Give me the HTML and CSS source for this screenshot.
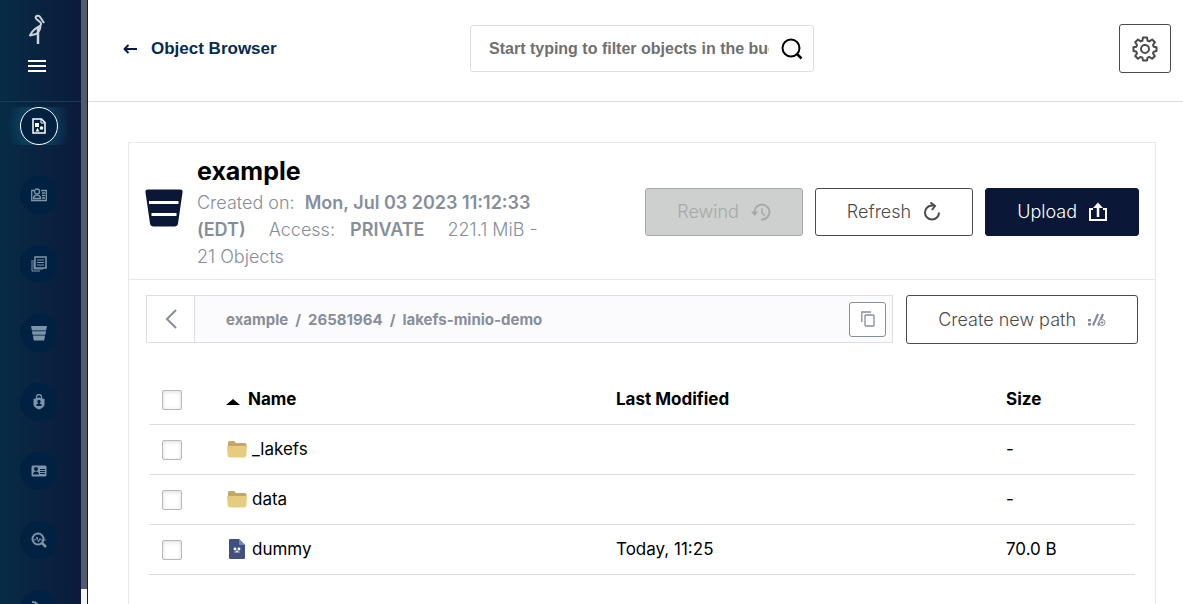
FILE: index.html
```html
<!DOCTYPE html>
<html lang="en">
<head>
    <meta charset="UTF-8">
    <meta name="viewport" content="width=device-width, initial-scale=1.0">
    <title>Object Browser</title>
    <link rel="stylesheet" href="styles.css">
</head>
<body>
    <aside class="sidebar">
        <div class="sidebar-body">
            <div class="sidebar-top">
                <svg class="logo" width="18" height="32" viewBox="0 0 18 32" fill="none" stroke="#cbd2da" stroke-width="2" stroke-linejoin="round">
                    <path d="M16 9L12.500 3.500Q11 1 8.500 2Q6.500 3.500 9 5.500L12.500 8.500Q14 11 11 12.500Q6 15 4 18L2 21.500L8 20Q12 18 12.500 12"/>
                    <path d="M10 14V30" stroke-width="2.500"/>
                </svg>
                <button class="menu-button" type="button" aria-label="Menu">
                    <svg width="18" height="12" viewBox="0 0 18 12" fill="#fff"><path d="M0 0h18v2H0zM0 5h18v2H0zM0 10h18v2H0z"/></svg>
                </button>
            </div>
            <nav class="menu">
                <a class="menu-item active" href="#" aria-label="Object Browser">
                    <span class="menu-icon">
                        <svg width="14" height="16" viewBox="0 0 14 16" fill="none" stroke="currentColor">
                            <path d="M1 1h8.500L13 4.500V15H1z" stroke-width="1.500"/>
                            <path d="M9 1v4h4"/>
                            <path d="M3 5h4v4H3zM5.500 10l2 3.500h-4z" fill="currentColor" stroke="none"/>
                            <circle cx="9.500" cy="10" r="1.800" fill="currentColor" stroke="none"/>
                        </svg>
                    </span>
                </a>
                <a class="menu-item" href="#" aria-label="Access Keys">
                    <span class="menu-icon">
                        <svg width="16" height="14" viewBox="0 0 16 14" fill="none" stroke="currentColor" stroke-width="1.300">
                            <path d="M3 2.500H.7v10h14.600v-10H10"/>
                            <circle cx="6" cy="3.500" r="2.500"/>
                            <path d="M2.500 10.500c0-4.500 7-4.500 7 0zM11 5h3M11 7.500h3M11 10h3"/>
                        </svg>
                    </span>
                </a>
                <a class="menu-item" href="#" aria-label="Documentation">
                    <span class="menu-icon">
                        <svg width="16" height="16" viewBox="0 0 16 16" fill="none" stroke="currentColor">
                            <path d="M4 1h11v11H4z" stroke-width="1.500"/>
                            <path d="M1 4v11h8M3 4v9h9M6 4h7M6 6.500h7M6 9h7"/>
                        </svg>
                    </span>
                </a>
                <a class="menu-item" href="#" aria-label="Buckets">
                    <span class="menu-icon">
                        <svg width="16" height="16" viewBox="0 0 16 16" fill="currentColor">
                            <path d="M0 1h16l-.8 4H.8zM1 6.500h14l-.6 3H1.600zM2 11h12l-.8 4.500H2.800z"/>
                            <path d="M.8 5h14.400L14 11H2z" opacity=".45"/>
                        </svg>
                    </span>
                </a>
                <a class="menu-item" href="#" aria-label="Policies">
                    <span class="menu-icon">
                        <svg width="12" height="16" viewBox="0 0 12 16" fill="none" stroke="currentColor">
                            <path d="M3.500 5V3a2.500 2.500 0 0 1 5 0v2" stroke-width="1.300"/>
                            <path d="M6 3.500L11.500 5v5c0 3-3 4.500-5.500 5.500C3.500 14.500.5 13 .5 10V5z" fill="currentColor" stroke="none"/>
                            <g class="menu-cut"><circle cx="6" cy="7.500" r="1.700"/><path d="M5 8h2v2h1.500v2h-5v-2H5z"/></g>
                        </svg>
                    </span>
                </a>
                <a class="menu-item" href="#" aria-label="Identity">
                    <span class="menu-icon">
                        <svg width="16" height="12" viewBox="0 0 16 12" fill="currentColor">
                            <rect x=".5" y=".5" width="15" height="11" rx="1.500"/>
                            <g class="menu-cut"><circle cx="5" cy="4" r="2"/><path d="M2 9.500c0-4 6-4 6 0zM9 4h5v1H9zM9 6h5v1H9zM9 8h5v1H9z"/></g>
                        </svg>
                    </span>
                </a>
                <a class="menu-item" href="#" aria-label="Monitoring">
                    <span class="menu-icon">
                        <svg width="16" height="16" viewBox="0 0 16 16" fill="none" stroke="currentColor">
                            <circle cx="7" cy="7" r="5.500" stroke-width="2"/>
                            <path d="M11 11l4 4" stroke-width="2.500"/>
                            <path d="M3 8h1.500L6 5l1.500 5L9 6.500l1 1.500h5"/>
                        </svg>
                    </span>
                </a>
                <a class="menu-item" href="#" aria-label="Notifications">
                    <span class="menu-icon">
                        <svg width="16" height="16" viewBox="0 0 16 16" fill="none" stroke="currentColor" stroke-width="2">
                            <path d="M1 1q5 0 6 4l7 8"/>
                        </svg>
                    </span>
                </a>
            </nav>
        </div>
        <div class="sidebar-track"><div class="sidebar-thumb"></div></div>
    </aside>

    <main class="content">
        <header class="page-header">
            <a class="back-link" href="#">
                <svg width="14" height="10" viewBox="0 0 14 10" fill="none" stroke="#081c42" stroke-width="2" stroke-linejoin="round"><path d="M14 5H2M5.500 1L1.500 5l4 4"/></svg>
                Object Browser
            </a>
            <div class="search">
                <input class="search-input" type="text" aria-label="Filter objects" placeholder="Start typing to filter objects in the bucket">
                <svg width="22" height="22" viewBox="0 0 22 22" fill="none" stroke="#000" stroke-width="2"><circle cx="10" cy="10" r="8.500"/><path d="M15.500 15.500L20.500 20.500" stroke-width="2.500"/></svg>
            </div>
            <button class="button settings-button" type="button" aria-label="Settings">
                <svg width="26" height="26" viewBox="0 0 26 26" fill="none" stroke="#4b4b4b" stroke-width="2" stroke-linejoin="round">
                    <path d="M11 1.500h4l.6 3.200 1.800.7 2.700-1.900 2.800 2.800L21 9l.7 1.700 2.800.6v3.800l-2.800.6L21 17.400l1.900 2.600-2.800 2.800-2.700-1.900-1.800.7L15 24.500h-4l-.6-2.900-1.800-.7-2.600 1.900L3.200 20 5 17.400l-.7-1.700-2.800-.6v-3.800l2.800-.6L5 9 3.200 6.300 6 3.500l2.600 1.900 1.800-.7z"/>
                    <circle cx="13" cy="13" r="4"/>
                </svg>
            </button>
        </header>

        <section class="panel">
            <div class="bucket-header">
                <svg class="bucket-icon" width="38" height="38" viewBox="0 0 38 38">
                    <path d="M3 .5h32q3 0 2.500 3L33 34.500q-.5 3-3.500 3h-21q-3 0-3.500-3L.5 3.500Q0 .5 3 .5z" fill="#0a1736"/>
                    <path d="M4 12h29.500v3H4zM6.500 24h25v3h-25z" fill="#fff"/>
                </svg>
                <div class="bucket-info">
                    <h1>example</h1>
                    <p>
                        <span class="info-item">Created on: <strong>Mon, Jul 03 2023 11:12:33 (EDT)</strong></span>
                        <span class="info-item">Access: <strong class="access">PRIVATE</strong></span>
                        <span>221.1 MiB - 21 Objects</span>
                    </p>
                </div>
                <div class="actions">
                    <button class="button" type="button" disabled>
                        Rewind
                        <svg width="20" height="18" viewBox="0 0 20 18" fill="none" stroke="currentColor" stroke-width="2">
                            <path d="M3.500 9.500A7.500 7.500 0 1 1 10 16.500"/>
                            <path d="M0 8.500h7.500L3.500 13z" fill="currentColor" stroke="none"/>
                            <path d="M11 5v5l3 2.500" stroke-width="1.500"/>
                        </svg>
                    </button>
                    <button class="button" type="button">
                        Refresh
                        <svg width="18" height="20" viewBox="0 0 18 20" fill="none" stroke="currentColor" stroke-width="2">
                            <path d="M16 10.500a7 7 0 1 1-7-7h2"/>
                            <path d="M7.500.5L12 4 9 8"/>
                        </svg>
                    </button>
                    <button class="button primary" type="button">
                        Upload
                        <svg width="18" height="20" viewBox="0 0 18 20" fill="none" stroke="currentColor" stroke-width="2">
                            <path d="M4 7H1v11h16V7h-3"/>
                            <path d="M9 15V4" stroke-width="2.500"/>
                            <path d="M4 6l5-5.500L14 6z" fill="currentColor" stroke="none"/>
                        </svg>
                    </button>
                </div>
            </div>

            <div class="path-row">
                <div class="breadcrumbs">
                    <button class="path-back" type="button" aria-label="Back">
                        <svg width="12" height="20" viewBox="0 0 12 20" fill="none" stroke="#868e9b" stroke-width="2"><path d="M11 1L2 10l9 9"/></svg>
                    </button>
                    <div class="path">
                        <a href="#">example</a><span>/</span><a href="#">26581964</a><span>/</span><a href="#">lakefs-minio-demo</a>
                    </div>
                    <button class="copy-button" type="button" aria-label="Copy path">
                        <svg width="14" height="16" viewBox="0 0 14 16" fill="none" stroke="#868e9b"><path d="M.8 11V1H10" stroke-width="1.300"/><rect x="4" y="4" width="9" height="11" rx="1" stroke-width="1.300"/></svg>
                    </button>
                </div>
                <button class="button new-path" type="button">
                    Create new path
                    <svg width="18" height="14" viewBox="0 0 18 14" fill="none" stroke="#868e9b">
                        <path d="M0 6h3v2.500H0zM0 10h3v2.500H0z" fill="#868e9b" stroke="none"/>
                        <path d="M5 12.500L10 1M10 12.500L15 1" stroke-width="2.200"/>
                        <circle cx="14" cy="9.500" r="3" fill="#fff"/>
                        <path d="M12.500 9.500h3M14 8v3"/>
                    </svg>
                </button>
            </div>

            <table class="objects">
                <thead>
                    <tr>
                        <th class="col-check"><input type="checkbox" aria-label="Select all"></th>
                        <th class="col-name"><span class="sort-arrow"></span>Name</th>
                        <th class="col-date">Last Modified</th>
                        <th>Size</th>
                    </tr>
                </thead>
                <tbody>
                    <tr>
                        <td><input type="checkbox" aria-label="Select _lakefs"></td>
                        <td>
                            <div class="object-name">
                                <svg width="20" height="20" viewBox="0 0 20 20"><path d="M1 7V3.500Q1 2 2.500 2H7l2 2h9q1.500 0 1.500 1.500V9H1z" fill="#c3a66a"/><path d="M0 7h20l-.7 9.500q-.3 2-2 2H2.700q-1.700 0-2-2z" fill="#e5cc80"/></svg>
                                _lakefs
                            </div>
                        </td>
                        <td></td>
                        <td>-</td>
                    </tr>
                    <tr>
                        <td><input type="checkbox" aria-label="Select data"></td>
                        <td>
                            <div class="object-name">
                                <svg width="20" height="20" viewBox="0 0 20 20"><path d="M1 7V3.500Q1 2 2.500 2H7l2 2h9q1.500 0 1.500 1.500V9H1z" fill="#c3a66a"/><path d="M0 7h20l-.7 9.500q-.3 2-2 2H2.700q-1.700 0-2-2z" fill="#e5cc80"/></svg>
                                data
                            </div>
                        </td>
                        <td></td>
                        <td>-</td>
                    </tr>
                    <tr>
                        <td><input type="checkbox" aria-label="Select dummy"></td>
                        <td>
                            <div class="object-name">
                                <svg width="20" height="20" viewBox="0 0 20 20"><path d="M3 0h9l6 6v13q0 1-1 1H3q-1 0-1-1V1q0-1 1-1z" fill="#42507f"/><path d="M12 0l6 6h-5q-1 0-1-1z" fill="#6f86c4"/><path d="M7.500 13.500h5v-1h-1.500v-1H9v1H7.500z" fill="#fff" opacity=".8"/><circle cx="8" cy="10" r="1.400" fill="#fff"/><circle cx="12" cy="10" r="1.400" fill="#fff"/></svg>
                                dummy
                            </div>
                        </td>
                        <td>Today, 11:25</td>
                        <td>70.0 B</td>
                    </tr>
                </tbody>
            </table>
        </section>
    </main>
</body>
</html>
```

FILE: styles.css
```css
* {
    box-sizing: border-box;
}
body {
    margin: 0;
    display: flex;
    height: 100vh;
    overflow: hidden;
    font-family: Inter, sans-serif;
    font-size: 17px;
    color: #000;
    background: #fff;
}
button {
    font: inherit;
    cursor: pointer;
}
a {
    color: inherit;
    text-decoration: none;
}
svg {
    display: block;
    flex: none;
}

/* Sidebar */
.sidebar {
    display: flex;
    flex: none;
    width: 88px;
    background: #081c42;
    border-right: 1px solid #081c42;
    overflow: hidden;
}
.sidebar-body {
    flex: 1;
    background: linear-gradient(90deg, #072b45, #0c1a3b);
}
.sidebar-top {
    display: flex;
    flex-direction: column;
    align-items: center;
    gap: 14px;
    height: 102px;
    padding: 14px 7px 0 0;
    border-bottom: 1px solid #133d5f;
}
.menu-button {
    padding: 0;
    border: none;
    background: none;
}
.menu {
    display: flex;
    flex-direction: column;
    gap: 31px;
    padding: 5px 11px 0 7px;
}
.menu-item {
    display: flex;
    justify-content: center;
    color: #7d95a8;
}
.menu-item.active {
    color: #fff;
    background: radial-gradient(ellipse 50% 110% at center, #0a5c7c, transparent);
}
.menu-icon {
    display: flex;
    align-items: center;
    justify-content: center;
    width: 38px;
    height: 38px;
    border-radius: 50%;
    background: #012142;
}
.active .menu-icon {
    border: 1px solid #fff;
}
.menu-cut {
    fill: #012142;
    stroke: none;
}
.sidebar-track {
    width: 6px;
    background: #f5f5f5;
}
.sidebar-thumb {
    height: calc(100% - 15px);
    background: #535a6d;
}

/* Header */
.content {
    display: flex;
    flex: 1;
    flex-direction: column;
    min-width: 0;
}
.page-header {
    display: grid;
    grid-template-columns: 1fr 344px 357px;
    align-items: center;
    height: 102px;
    padding: 0 12px 4px 35px;
    border-bottom: 1px solid #dcdee0;
}
.back-link {
    display: flex;
    align-items: center;
    gap: 14px;
    font-family: "Liberation Sans", Arial, sans-serif;
    font-weight: bold;
    color: #072c4f;
}
.search {
    display: flex;
    align-items: center;
    gap: 12px;
    height: 47px;
    padding: 0 10px 0 18px;
    border: 1px solid #dcdee0;
    border-radius: 3px;
}
.search-input {
    flex: 1;
    min-width: 0;
    padding: 0;
    border: none;
    outline: none;
    font-family: "Liberation Sans", Arial, sans-serif;
    font-size: 16px;
    font-weight: bold;
    background: none;
}
.search-input::placeholder {
    color: #707070;
}
.button {
    display: flex;
    align-items: center;
    justify-content: center;
    gap: 12px;
    height: 48px;
    padding: 0 31px;
    border: 1px solid #4b4b4b;
    border-radius: 3px;
    font-size: 18px;
    font-weight: 300;
    white-space: nowrap;
    color: #4b4b4b;
    background: #fff;
}
.button:disabled {
    color: #a6a9a9;
    border-color: #a6a9a9;
    background: #cdd0cf;
    cursor: default;
}
.button.primary {
    color: #fff;
    border-color: #0a1736;
    background: #0a1736;
}
.settings-button {
    width: 52px;
    height: 49px;
    padding: 0;
    justify-self: end;
}

/* Bucket panel */
.panel {
    flex: 1;
    margin: 40px 27px 0 40px;
    border: 1px solid #e6e9ea;
    border-bottom: none;
}
.bucket-header {
    display: flex;
    align-items: center;
    gap: 14px;
    padding: 10px 16px 9px;
    border-bottom: 1px solid #e6e9ea;
}
.bucket-icon {
    margin-bottom: 8px;
}
.bucket-info {
    width: 344px;
}
.bucket-info h1 {
    margin: 0;
    font-size: 25px;
    font-weight: 700;
    line-height: 36px;
}
.bucket-info p {
    margin: 0;
    font-size: 18px;
    font-weight: 300;
    line-height: 27px;
    color: #868e9b;
}
.bucket-info strong {
    margin-left: 5px;
    font-weight: 600;
}
.bucket-info .access {
    margin-left: 10px;
}
.info-item {
    margin-right: 18px;
}
.actions {
    display: flex;
    gap: 12px;
    margin-left: auto;
}
.path-row {
    display: flex;
    gap: 13px;
    padding: 15px 17px 0;
}
.breadcrumbs {
    display: flex;
    align-items: center;
    flex: 1;
    height: 48px;
    border: 1px solid #dcdee0;
    background: #fbfafd;
}
.path-back {
    display: flex;
    align-items: center;
    justify-content: center;
    width: 48px;
    height: 100%;
    border: none;
    border-right: 1px solid #dcdee0;
    background: #fff;
}
.path {
    display: flex;
    flex: 1;
    gap: 7px;
    padding-left: 31px;
    font-size: 15px;
    font-weight: 700;
    color: #868e9b;
}
.copy-button {
    display: flex;
    align-items: center;
    justify-content: center;
    width: 37px;
    height: 35px;
    margin-right: 6px;
    padding: 0;
    border: 1px solid #868e9b;
    border-radius: 3px;
    background: #fff;
}
.new-path {
    height: 49px;
}

/* Objects table */
.objects {
    width: calc(100% - 40px);
    margin: 30px 20px 0;
    border-collapse: collapse;
    table-layout: fixed;
}
.objects th, .objects td {
    height: 50px;
    padding: 0;
    border-bottom: 1px solid #dcdcdc;
    text-align: left;
}
.objects th {
    font-weight: 700;
}
.objects .col-check {
    width: 77px;
}
.objects .col-name, .objects .col-date {
    width: 390px;
}
.objects input {
    display: block;
    appearance: none;
    width: 20px;
    height: 20px;
    margin: 2px 0 0 13px;
    border: 1px solid #b9b9b9;
    border-radius: 2px;
    background: #fff;
    box-shadow: inset 0 1px 4px #ddd;
}
.sort-arrow {
    display: inline-block;
    margin-right: 8px;
    border: 7px solid transparent;
    border-top: none;
    border-bottom: 6px solid #000;
}
.object-name {
    display: flex;
    align-items: center;
    gap: 5px;
    padding-left: 1px;
}
```
